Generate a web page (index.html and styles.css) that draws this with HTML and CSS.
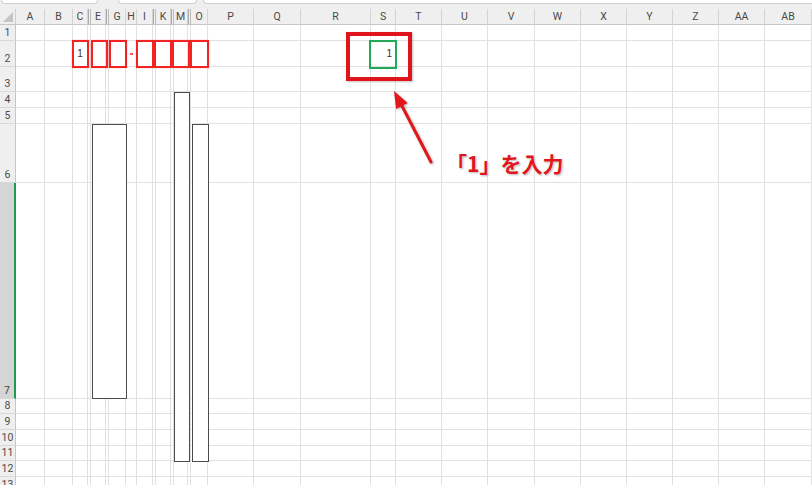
FILE: index.html
```html
<!DOCTYPE html>
<html lang="ja">
<head>
<meta charset="utf-8">
<title>Sheet</title>
<link rel="stylesheet" href="styles.css">
</head>
<body>
<div class="page">
  <div class="ribbon-edge">
    <div class="tab tab-a"></div>
    <div class="tab tab-b"></div>
    <div class="tab tab-c"></div>
  </div>
  <div class="sheet">
    <div class="corner"><span class="tri"></span></div>
    <div class="ch">A</div><div class="ch">B</div><div class="ch">C</div><div class="ch nar"></div><div class="ch">E</div><div class="ch nar"></div><div class="ch">G</div>
    <div class="ch">H</div><div class="ch">I</div><div class="ch nar"></div><div class="ch">K</div><div class="ch nar"></div><div class="ch">M</div><div class="ch nar"></div>
    <div class="ch">O</div><div class="ch">P</div><div class="ch">Q</div><div class="ch">R</div><div class="ch">S</div><div class="ch">T</div><div class="ch">U</div>
    <div class="ch">V</div><div class="ch">W</div><div class="ch">X</div><div class="ch">Y</div><div class="ch">Z</div><div class="ch">AA</div><div class="ch">AB</div>

    <div class="rh">1</div>
    <i></i><i></i><i></i><i></i><i></i><i></i><i></i><i></i><i></i><i></i><i></i><i></i><i></i><i></i>
    <i></i><i></i><i></i><i></i><i></i><i></i><i></i><i></i><i></i><i></i><i></i><i></i><i></i><i></i>

    <div class="rh">2</div>
    <i></i><i></i><i class="v ctr">1</i>
    <i></i><i></i><i></i><i></i><i></i><i></i><i></i><i></i><i></i><i></i><i></i><i></i><i></i><i></i><i></i>
    <i class="v rgt">1</i>
    <i></i><i></i><i></i><i></i><i></i><i></i><i></i><i></i><i></i>

    <div class="rh">3</div>
    <i></i><i></i><i></i><i></i><i></i><i></i><i></i><i></i><i></i><i></i><i></i><i></i><i></i><i></i>
    <i></i><i></i><i></i><i></i><i></i><i></i><i></i><i></i><i></i><i></i><i></i><i></i><i></i><i></i>

    <div class="rh">4</div>
    <i></i><i></i><i></i><i></i><i></i><i></i><i></i><i></i><i></i><i></i><i></i><i></i><i></i><i></i>
    <i></i><i></i><i></i><i></i><i></i><i></i><i></i><i></i><i></i><i></i><i></i><i></i><i></i><i></i>

    <div class="rh">5</div>
    <i></i><i></i><i></i><i></i><i></i><i></i><i></i><i></i><i></i><i></i><i></i><i></i><i></i><i></i>
    <i></i><i></i><i></i><i></i><i></i><i></i><i></i><i></i><i></i><i></i><i></i><i></i><i></i><i></i>

    <div class="rh">6</div>
    <i></i><i></i><i></i><i></i><i></i><i></i><i></i><i></i><i></i><i></i><i></i><i></i><i></i><i></i>
    <i></i><i></i><i></i><i></i><i></i><i></i><i></i><i></i><i></i><i></i><i></i><i></i><i></i><i></i>

    <div class="rh sel">7</div>
    <i></i><i></i><i></i><i></i><i></i><i></i><i></i><i></i><i></i><i></i><i></i><i></i><i></i><i></i>
    <i></i><i></i><i></i><i></i><i></i><i></i><i></i><i></i><i></i><i></i><i></i><i></i><i></i><i></i>

    <div class="rh">8</div>
    <i></i><i></i><i></i><i></i><i></i><i></i><i></i><i></i><i></i><i></i><i></i><i></i><i></i><i></i>
    <i></i><i></i><i></i><i></i><i></i><i></i><i></i><i></i><i></i><i></i><i></i><i></i><i></i><i></i>

    <div class="rh">9</div>
    <i></i><i></i><i></i><i></i><i></i><i></i><i></i><i></i><i></i><i></i><i></i><i></i><i></i><i></i>
    <i></i><i></i><i></i><i></i><i></i><i></i><i></i><i></i><i></i><i></i><i></i><i></i><i></i><i></i>

    <div class="rh">10</div>
    <i></i><i></i><i></i><i></i><i></i><i></i><i></i><i></i><i></i><i></i><i></i><i></i><i></i><i></i>
    <i></i><i></i><i></i><i></i><i></i><i></i><i></i><i></i><i></i><i></i><i></i><i></i><i></i><i></i>

    <div class="rh">11</div>
    <i></i><i></i><i></i><i></i><i></i><i></i><i></i><i></i><i></i><i></i><i></i><i></i><i></i><i></i>
    <i></i><i></i><i></i><i></i><i></i><i></i><i></i><i></i><i></i><i></i><i></i><i></i><i></i><i></i>

    <div class="rh">12</div>
    <i></i><i></i><i></i><i></i><i></i><i></i><i></i><i></i><i></i><i></i><i></i><i></i><i></i><i></i>
    <i></i><i></i><i></i><i></i><i></i><i></i><i></i><i></i><i></i><i></i><i></i><i></i><i></i><i></i>

    <div class="rh">13</div>
    <i></i><i></i><i></i><i></i><i></i><i></i><i></i><i></i><i></i><i></i><i></i><i></i><i></i><i></i>
    <i></i><i></i><i></i><i></i><i></i><i></i><i></i><i></i><i></i><i></i><i></i><i></i><i></i><i></i>
  </div>

  <div class="shape s1"></div>
  <div class="shape s2"></div>
  <div class="shape s3"></div>

  <div class="rb rb1"></div>
  <div class="rb rb2"></div>
  <div class="rb rb3"></div>
  <div class="dash"></div>
  <div class="rb rb4"></div>
  <div class="rb rb5"></div>
  <div class="rb rb6"></div>
  <div class="rb rb7"></div>

  <div class="active"></div>
  <div class="callout"></div>

  <svg class="arrow" width="812" height="485" viewBox="0 0 812 485">
    <line x1="431" y1="162" x2="401" y2="104" stroke="#e3161c" stroke-width="3" stroke-linecap="round"/>
    <polygon points="394,91 407.7,103.1 396.1,109.1" fill="#e3161c"/>
  </svg>

  <div class="note">「<b>1</b>」を入力</div>
</div>
</body>
</html>
```

FILE: styles.css
```css
* { box-sizing: border-box; }
html, body { margin: 0; padding: 0; background: #fff; }

.page {
  position: relative;
  width: 812px;
  height: 485px;
  overflow: hidden;
  background: #fff;
  font-family: "Liberation Sans", Arial, sans-serif;
}

/* strip under the formula bar */
.ribbon-edge {
  display: flex;
  align-items: flex-start;
  height: 9px;
  background: #efefef;
}
.tab {
  height: 4px;
  background: #fff;
  border: 1px solid #d0d0d0;
  border-top: 0;
  border-radius: 0 0 4px 4px;
}
.tab-a { margin-left: 1px; width: 97px; }
.tab-b { margin-left: 20px; width: 79px; }
.tab-c { margin-left: 6px; flex: 1; border-right: 0; border-radius: 0 0 0 4px; }

/* worksheet grid */
.sheet {
  display: grid;
  grid-template-columns: 16px 29px 28px 15px 3px 15px 3px 17px 11px 16px 3px 15px 3px 14px 3px 17px 46px 47px 70px 25px 46px 46px 47px 46px 46px 46px 46px 46px 47px;
  grid-template-rows: 16px 16px 26px 25px 16px 16px 59px 216px 15px 16px 16px 15px 16px 16px;
}
.sheet > i {
  display: block;
  font-style: normal;
  border-right: 1px solid #e1e1e1;
  border-bottom: 1px solid #e1e1e1;
  overflow: hidden;
}

.corner {
  position: relative;
  background: #efefef;
  border-right: 1px solid #cfcfcf;
  border-bottom: 1px solid #c6c6c6;
}
.tri {
  position: absolute;
  right: 2px;
  bottom: 2px;
  width: 10px;
  height: 10px;
  background: #c4c4c4;
  clip-path: polygon(100% 0, 100% 100%, 0 100%);
}

.ch {
  display: flex;
  align-items: center;
  justify-content: center;
  overflow: hidden;
  white-space: nowrap;
  background: #efefef;
  border-right: 1px solid #d3d3d3;
  border-bottom: 1px solid #c6c6c6;
  color: #4a4a4a;
  font-family: "Liberation Sans Narrow", Roboto, sans-serif;
  font-size: 10.5px;
  line-height: 15px;
}
/* hidden-width columns: the clipped label reads as a dark sliver */
.ch.nar {
  border-left: 1px solid #a9a9a9;
  border-right: 1px solid #bdbdbd;
}

.rh {
  display: flex;
  align-items: flex-end;
  justify-content: center;
  background: #efefef;
  border-right: 1px solid #c6c6c6;
  border-bottom: 1px solid #d8d8d8;
  color: #4a4a4a;
  font-family: "Liberation Sans Narrow", Roboto, sans-serif;
  font-size: 10.5px;
  line-height: 15px;
}
.rh.sel {
  background: #d5d5d5;
  border-right: 2px solid #1f9a4e;
  color: #444;
}

.v {
  display: flex !important;
  align-items: center;
  font-size: 10px;
  color: #333;
}
.ctr { justify-content: center; }
.rgt { justify-content: flex-end; padding-right: 3px; }

/* drawn shapes */
.shape {
  position: absolute;
  background: #fff;
  border: 1px solid #4c4c4c;
}
.s1 { left: 92px; top: 124px; width: 35px; height: 275px; }
.s2 { left: 174px; top: 92px; width: 16px; height: 370px; }
.s3 { left: 192px; top: 124px; width: 17px; height: 338px; }

/* red character boxes */
.rb {
  position: absolute;
  top: 40px;
  height: 28px;
  border: 2px solid #f42323;
  box-shadow: 0 0 1px rgba(255, 60, 60, 0.6);
}
.rb1 { left: 72px; width: 17px; }
.rb2 { left: 91px; width: 17px; }
.rb3 { left: 109px; width: 18px; }
.rb4 { left: 136px; width: 18px; }
.rb5 { left: 154px; width: 18px; }
.rb6 { left: 172px; width: 18px; }
.rb7 { left: 190px; width: 19px; }
.dash {
  position: absolute;
  left: 130px;
  top: 53px;
  width: 3px;
  height: 2px;
  background: #f75a5a;
}

.active {
  position: absolute;
  left: 369px;
  top: 40px;
  width: 28px;
  height: 29px;
  border: 2px solid #22a957;
}
.callout {
  position: absolute;
  left: 346px;
  top: 32px;
  width: 66px;
  height: 49px;
  border: 4px solid #e0141a;
  box-shadow: 1px 1px 2px rgba(0, 0, 0, 0.25);
}

.arrow {
  position: absolute;
  left: 0;
  top: 0;
  filter: drop-shadow(1px 1px 1px rgba(0, 0, 0, 0.3));
}

.note {
  position: absolute;
  left: 446px;
  top: 153px;
  font-family: "Noto Sans CJK JP", sans-serif;
  font-weight: 700;
  font-size: 21px;
  line-height: 21px;
  color: #e0161c;
  white-space: nowrap;
  text-shadow: 0 0 2px #fff, 1px 1px 2px rgba(0, 0, 0, 0.35);
}
.note b { font-weight: 700; }
```
